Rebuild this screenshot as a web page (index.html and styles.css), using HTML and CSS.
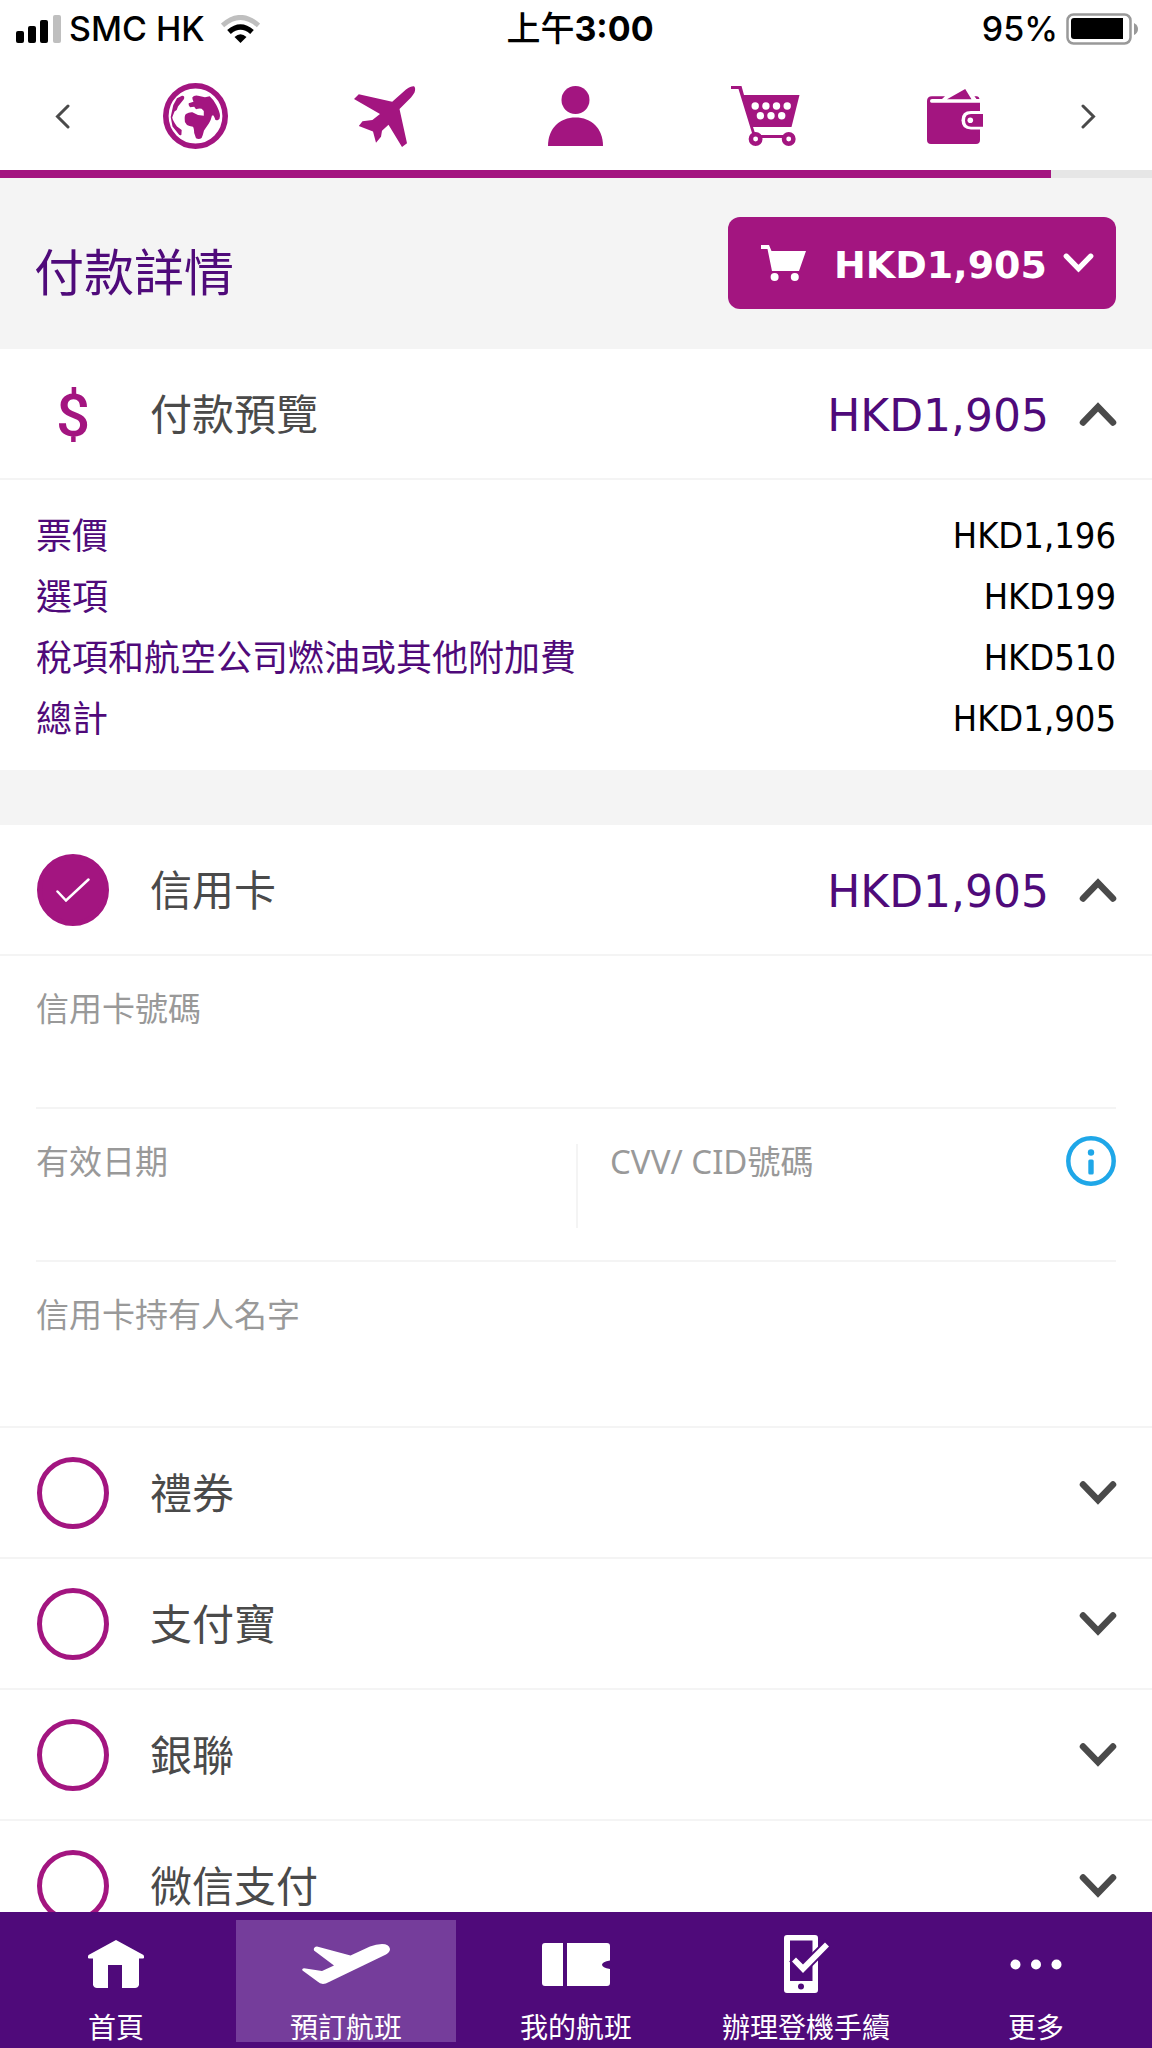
FILE: index.html
```html
<!DOCTYPE html>
<html lang="zh-Hant-HK">
<head>
<meta charset="utf-8">
<meta name="viewport" content="width=device-width, initial-scale=1">
<title>付款詳情</title>
<link rel="stylesheet" href="styles.css">
</head>
<body>
<svg class="defs" aria-hidden="true">
  <symbol id="chevron-down" viewBox="0 0 38 24"><path d="M4 3.500 19 19 34 3.500" fill="none" stroke="currentColor" stroke-width="6.500" stroke-linecap="round"/></symbol>
  <symbol id="chevron-up" viewBox="0 0 38 24"><path d="M4 20.500 19 5 34 20.500" fill="none" stroke="currentColor" stroke-width="6.500" stroke-linecap="round"/></symbol>
</svg>
<div class="app">
  <div class="status">
    <div class="status-left">
      <svg width="45" height="28" viewBox="0 0 45 28" aria-hidden="true"><rect y="16" width="8" height="12" rx="2"/><rect x="12" y="11" width="8" height="17" rx="2"/><rect x="24" y="5" width="8" height="23" rx="2"/><rect x="37" width="8" height="28" rx="2" fill="#bfbfbf"/></svg>
      <span>SMC HK</span>
      <svg class="wifi" width="39" height="28" viewBox="0 0 39 28" aria-hidden="true"><path d="M1.500 10.500Q19.500-5.500 37.500 10.500" fill="none" stroke="#bfbfbf" stroke-width="5"/><path d="M8 17Q19.500 7 31 17" fill="none" stroke="#000" stroke-width="5.500"/><path d="M13.500 22Q19.500 16.500 25.500 22L19.500 28Z"/></svg>
    </div>
    <time class="clock"><span class="meridiem">上午</span>3:00</time>
    <div class="status-right">
      <span>95%</span>
      <svg width="78" height="32" viewBox="0 0 78 32" aria-hidden="true"><rect x="1.500" y="1.500" width="63" height="29" rx="6" fill="none" stroke="#999" stroke-width="2.500"/><path d="M8 5H57V26H8Q5 26 5 23V8Q5 5 8 5Z"/><path d="M68 10Q72 12 72 16T68 22Z" fill="#999"/></svg>
    </div>
  </div>

  <nav class="steps" aria-label="預訂步驟">
    <button class="step-arrow" type="button" aria-label="上一步"><svg width="15" height="25" viewBox="0 0 15 25"><path d="M13 2 2.500 12.500 13 23" fill="none" stroke="currentColor" stroke-width="3" stroke-linecap="round"/></svg></button>
    <a class="step" href="#" aria-label="目的地"><svg width="65" height="66" viewBox="0 0 65 66"><ellipse cx="32.500" cy="33" rx="29.700" ry="30.200" fill="none" stroke="currentColor" stroke-width="5.600"/><path fill="currentColor" d="M29.400 14.300Q31 12 35 12.700L42 14.300 46.700 13.300Q50 16 53.300 22 57 29 57 33 57 36 55 37 52 38 51.500 34.500L50.500 32.500H49Q48 37 46 40.300L41 47.500Q40 52 38.600 55 36 57 33 55.300L31.200 50Q31 45 30 43.700 26 43 24 42 21 39 21.700 36 21.500 32 23 31 26 29 29.400 29.300L35 32 40.800 32.700V28L38.600 25.700Q36 25 33 26.300L31.200 23.700 27 24.300Q25 22 25.700 20.300L30.500 18.700Q29 16.500 29.400 14.300ZM19 12.700Q22 12.500 21 16L15 23.500Q14.500 27 11.500 28.500L9.200 34.500Q10 38 14 43.500L18.700 47 18.400 51.700Q17 53 15.500 51L9.500 43.500 7.700 34 10.300 22 14 15.300Z"/></svg></a>
    <a class="step" href="#" aria-label="航班"><svg width="62" height="61" viewBox="0 0 62 61"><path fill="currentColor" d="M0 13 4.800 8.300 38.200 15.700 52 3.500Q57 0 60 .300 62 2 60.500 6.500 59 9 57 11.500L45.500 23 53 57.300 48 61 34.500 38.700 28 44.700 27 50.700 22 56.700 19 45.500 4.800 40 8.500 35.300 18.400 34 26 28Z"/></svg></a>
    <a class="step" href="#" aria-label="乘客"><svg width="55" height="60" viewBox="0 0 55 60"><circle cx="27.500" cy="14" r="14" fill="currentColor"/><path fill="currentColor" d="M0 60C0 42 12 31.500 27.500 31.500S55 42 55 60Z"/></svg></a>
    <a class="step" href="#" aria-label="選項"><svg width="69" height="60" viewBox="0 0 69 60"><path fill="currentColor" d="M0 0H10.500L13 9H68.500L60.500 41H22L24 47H21L7.500 3H0Z"/><path d="M25 50.500H57" stroke="currentColor" stroke-width="3"/><g fill="#fff" stroke="currentColor" stroke-width="4.500"><circle cx="24.600" cy="53" r="4.700"/><circle cx="57.700" cy="53" r="4.700"/></g><g fill="#fff"><circle cx="24.200" cy="20" r="3.700"/><circle cx="34.900" cy="20" r="3.700"/><circle cx="45.500" cy="20" r="3.700"/><circle cx="56.200" cy="20" r="3.700"/><circle cx="29.400" cy="29.700" r="3.700"/><circle cx="40" cy="29.700" r="3.700"/><circle cx="50.700" cy="29.700" r="3.700"/></g></svg></a>
    <a class="step" href="#" aria-label="付款" aria-current="step"><svg width="56" height="55" viewBox="0 0 56 55"><path fill="currentColor" d="M5 7.300H18L15 10H5Q3 10 3 12T5 13.700H53V51Q53 55 49 55H4Q0 55 0 51V12Q0 7.300 5 7.300ZM20 10.300 38.200 0 44.500 10.300ZM47.400 7.300H50Q52 7.500 52.500 10H49.500Z"/><path fill="#fff" d="M56 22H44Q34.500 22 34.500 31.200T44 40.400H56Z"/><path fill="currentColor" d="M56 25H44Q38 25 38 31.300T44 37.700H56Z"/><circle cx="43.300" cy="31.300" r="2.800" fill="#fff"/></svg></a>
    <button class="step-arrow" type="button" aria-label="下一步"><svg width="15" height="25" viewBox="0 0 15 25"><path d="M2 2 12.500 12.500 2 23" fill="none" stroke="currentColor" stroke-width="3" stroke-linecap="round"/></svg></button>
  </nav>
  <div class="progress" role="progressbar" aria-label="預訂進度" aria-valuenow="91"><div class="progress-fill" style="width:91.2%"></div></div>

  <main class="content">
    <header class="title-bar">
      <h1>付款詳情</h1>
      <button class="cart-button" type="button">
        <svg width="45" height="36" viewBox="0 0 45 36" aria-hidden="true"><path fill="currentColor" d="M0 0H8L10.500 6H45L38 26H11L6.500 4H0Z"/><circle cx="13.600" cy="32" r="4" fill="currentColor"/><circle cx="33.800" cy="32" r="4" fill="currentColor"/></svg>
        <span class="cart-total">HKD1,905</span>
        <svg width="31" height="20" viewBox="0 0 38 24" aria-hidden="true"><use href="#chevron-down"/></svg>
      </button>
    </header>

    <section>
      <div class="row">
        <span class="dollar" aria-hidden="true">$</span>
        <h2 class="row-title">付款預覽</h2>
        <span class="row-amount">HKD1,905</span>
        <button class="toggle" type="button" aria-label="收起付款預覽"><svg width="38" height="24"><use href="#chevron-up"/></svg></button>
      </div>
      <div class="summary">
        <table>
          <tbody>
            <tr><th scope="row">票價</th><td>HKD1,196</td></tr>
            <tr><th scope="row">選項</th><td>HKD199</td></tr>
            <tr><th scope="row">稅項和航空公司燃油或其他附加費</th><td>HKD510</td></tr>
            <tr><th scope="row">總計</th><td>HKD1,905</td></tr>
          </tbody>
        </table>
      </div>
    </section>

    <form class="methods">
      <div class="row">
        <span class="radio"><input type="radio" name="method" id="m-card" checked><svg width="34" height="24" viewBox="0 0 34 24" aria-hidden="true"><path d="M1.500 13.500 10 22.500 32.500 1.500" fill="none" stroke="#fff" stroke-width="2.500" stroke-linecap="round"/></svg></span>
        <label class="row-title" for="m-card">信用卡</label>
        <span class="row-amount">HKD1,905</span>
        <button class="toggle" type="button" aria-label="收起信用卡"><svg width="38" height="24"><use href="#chevron-up"/></svg></button>
      </div>
      <div class="card-form">
        <div class="field-row">
          <div class="field"><label for="number">信用卡號碼</label><input id="number" type="text" inputmode="numeric"></div>
        </div>
        <div class="field-row">
          <div class="field"><label for="expiry">有效日期</label><input id="expiry" type="text"></div>
          <div class="field field-split"><label for="cvv">CVV/ CID號碼</label><input id="cvv" type="text" inputmode="numeric"></div>
          <button class="info" type="button" aria-label="CVV 說明"><svg width="50" height="50" viewBox="0 0 50 50"><circle cx="25" cy="25" r="22.700" fill="none" stroke="currentColor" stroke-width="4.500"/><circle cx="25" cy="16.500" r="3.200" fill="currentColor"/><rect x="22.300" y="23.500" width="5.400" height="15" rx="1.500" fill="currentColor"/></svg></button>
        </div>
        <div class="field-row">
          <div class="field"><label for="holder">信用卡持有人名字</label><input id="holder" type="text"></div>
        </div>
      </div>
      <div class="row">
        <span class="radio"><input type="radio" name="method" id="m-voucher"></span>
        <label class="row-title" for="m-voucher">禮券</label>
        <button class="toggle" type="button" aria-label="展開禮券"><svg width="38" height="24"><use href="#chevron-down"/></svg></button>
      </div>
      <div class="row">
        <span class="radio"><input type="radio" name="method" id="m-alipay"></span>
        <label class="row-title" for="m-alipay">支付寶</label>
        <button class="toggle" type="button" aria-label="展開支付寶"><svg width="38" height="24"><use href="#chevron-down"/></svg></button>
      </div>
      <div class="row">
        <span class="radio"><input type="radio" name="method" id="m-unionpay"></span>
        <label class="row-title" for="m-unionpay">銀聯</label>
        <button class="toggle" type="button" aria-label="展開銀聯"><svg width="38" height="24"><use href="#chevron-down"/></svg></button>
      </div>
      <div class="row">
        <span class="radio"><input type="radio" name="method" id="m-wechat"></span>
        <label class="row-title" for="m-wechat">微信支付</label>
        <button class="toggle" type="button" aria-label="展開微信支付"><svg width="38" height="24"><use href="#chevron-down"/></svg></button>
      </div>
    </form>
  </main>

  <nav class="tabs" aria-label="主選單">
    <a class="tab" href="#"><span class="tab-icon"><svg width="56" height="48" viewBox="0 0 56 48"><path fill="currentColor" d="M28 0 55.500 15Q57 18.500 55 18.500H51V45Q50 48 47 48H34V25H20V48H9Q6 48 5 45V18.500H1Q-1 18.500 .500 15Z"/></svg></span><span>首頁</span></a>
    <a class="tab active" href="#" aria-current="page"><span class="tab-icon"><svg width="88" height="40" viewBox="0 0 88 40"><path fill="currentColor" d="M2 24.200 20 27 32 21.500 12 6.500Q11 3 15 2.500L48.500 11.500 68 2.500Q74 0 80 0 87 0 88 5 88 8 84 10.500L27 38Q20 42 15.500 37.500L.500 26.500Q-.500 24.500 2 24.200Z"/></svg></span><span>預訂航班</span></a>
    <a class="tab" href="#"><span class="tab-icon"><svg width="68" height="43" viewBox="0 0 68 43"><path fill="currentColor" d="M3 0H21V43H3Q0 43 0 40V3Q0 0 3 0ZM25 0H65Q68 0 68 3V17.500Q60 19 60 21.700T68 26V40Q68 43 65 43H25Z"/></svg></span><span>我的航班</span></a>
    <a class="tab" href="#"><span class="tab-icon"><svg width="45" height="58" viewBox="0 0 45 58"><path fill="currentColor" fill-rule="evenodd" d="M3 0H31Q34 0 34 3V55Q34 58 31 58H3Q0 58 0 55V3Q0 0 3 0ZM6 5.500V46H28.500V5.500ZM17 48.500A3 3 0 0 0 17 54.500 3 3 0 0 0 17 48.500Z"/><path d="M8 26.500 12 22.500 19 29.500 41 7.500 45 11.500 19 38Z" fill="currentColor" stroke="#4f0a7a" stroke-width="4" paint-order="stroke"/></svg></span><span>辦理登機手續</span></a>
    <a class="tab" href="#"><span class="tab-icon"><svg width="52" height="11" viewBox="0 0 52 11" fill="currentColor"><circle cx="5.500" cy="5.500" r="5"/><circle cx="26" cy="5.500" r="5"/><circle cx="46.500" cy="5.500" r="5"/></svg></span><span>更多</span></a>
  </nav>
</div>
</body>
</html>
```
FILE: styles.css
```css
:root {
  --magenta: #a31580;
  --purple: #4f0a7a;
  --grey: #f4f4f4;
  --ink: #4a4a4a;
  --gutter: 36px;
}

* { box-sizing: border-box; }

body {
  margin: 0;
  color: var(--ink);
  background: #fff;
  font-family: "Noto Sans", "Noto Sans CJK TC", sans-serif;
}

button {
  margin: 0;
  padding: 0;
  border: 0;
  background: none;
  color: inherit;
  font: inherit;
  cursor: pointer;
}

svg { display: block; flex: none; }
.defs { display: none; }
a { color: inherit; text-decoration: none; }
h1, h2 { margin: 0; font-weight: 400; }

.app {
  display: flex;
  flex-direction: column;
  height: 100vh;
}

/* Status bar */
.status {
  display: grid;
  grid-template-columns: 1fr auto 1fr;
  padding: 8px 8px 12px 16px;
  color: #000;
  font-family: Inter, "Noto Sans CJK TC", sans-serif;
  font-size: 34px;
  font-weight: 500;
  line-height: 42px;
}
.status-left, .status-right { display: flex; align-items: center; gap: 8px; }
.wifi { margin-left: 8px; }
.status-right { justify-content: flex-end; }
.clock { font-weight: 700; }
.meridiem { font-weight: 500; }

/* Booking steps */
.steps {
  display: flex;
  align-items: center;
  height: 108px;
  padding: 0 26px 0 24px;
  color: var(--magenta);
}
.step-arrow {
  display: flex;
  justify-content: center;
  width: 76px;
  padding: 24px 0;
  color: var(--ink);
}
.step { flex: 1; display: flex; justify-content: center; }
.progress { height: 8px; background: #e6e6e6; flex: none; }
.progress-fill { height: 100%; background: var(--magenta); }

.content {
  flex: 1;
  min-height: 0;
  overflow-y: auto;
  scrollbar-width: none;
}

/* Page title */
.title-bar {
  display: flex;
  align-items: flex-end;
  justify-content: space-between;
  padding: 39px var(--gutter) 40px 34px;
  background: var(--grey);
}
h1 { color: var(--purple); font-size: 50px; line-height: 74px; }
.cart-button {
  display: flex;
  align-items: center;
  height: 92px;
  padding: 0 22px 0 33px;
  border-radius: 12px;
  background: var(--magenta);
  color: #fff;
}
.cart-total {
  margin: 0 16px 0 28px;
  padding-top: 3px;
  font-family: "DejaVu Sans", sans-serif;
  font-size: 38px;
  font-weight: 700;
}

/* Accordion rows */
.row {
  display: flex;
  align-items: center;
  height: 131px;
  padding: 0 35px 0 37px;
  border-bottom: 2px solid var(--grey);
}
.row-title { flex: 1; margin-left: 41px; font-size: 42px; line-height: 60px; }
.row-amount {
  margin-right: 30px;
  padding-top: 3px;
  color: var(--purple);
  font-family: "DejaVu Sans", sans-serif;
  font-size: 44px;
}
.dollar {
  width: 72px;
  padding-top: 3px;
  color: var(--magenta);
  font-family: Roboto, sans-serif;
  font-size: 60px;
  font-weight: 500;
  text-align: center;
}

/* Price summary */
.summary { padding: 25px var(--gutter) 21px; }
table { width: 100%; border-collapse: collapse; font-size: 36px; line-height: 61px; }
th, td { height: 61px; padding: 0; }
th { color: var(--purple); font-weight: 400; text-align: left; }
td {
  color: #000;
  font-family: "DejaVu Sans Condensed", "DejaVu Sans", sans-serif;
  font-size: 36px;
  text-align: right;
}

/* Payment methods */
.methods { border-top: 55px solid var(--grey); }
.radio { display: grid; place-items: center; }
.radio > * { grid-area: 1 / 1; }
.radio svg { pointer-events: none; z-index: 1; }
.radio input {
  appearance: none;
  width: 72px;
  height: 72px;
  margin: 0;
  border: 5px solid var(--magenta);
  border-radius: 50%;
}
.radio input:checked { background: var(--magenta); }

.card-form {
  padding: 0 var(--gutter) 13px;
  border-bottom: 2px solid var(--grey);
}
.field-row {
  position: relative;
  display: grid;
  grid-auto-flow: column;
  grid-auto-columns: minmax(0, 1fr);
  border-bottom: 2px solid var(--grey);
}
.field-row:last-child { border-bottom: 0; }
.field { display: flex; flex-direction: column; padding-top: 28px; }
.field-split {
  padding-left: 34px;
  background: linear-gradient(var(--grey), var(--grey)) 0 35px / 2px 84px no-repeat;
}
.field label { color: #999; font-size: 33px; line-height: 50px; }
.field input {
  width: 100%;
  height: 73px;
  padding: 0;
  border: 0;
  outline: 0;
  background: none;
  color: var(--ink);
  font: inherit;
  font-size: 33px;
}
/* Sits over the end of the security code field */
.info { position: absolute; top: 27px; right: 0; color: #1fa7e8; }

/* Bottom tabs */
.tabs {
  flex: none;
  display: grid;
  grid-template-columns: repeat(5, 1fr);
  gap: 10px;
  padding: 8px 6px 6px;
  background: var(--purple);
  color: #fff;
}
.tab {
  display: flex;
  flex-direction: column;
  align-items: center;
  gap: 4px;
  font-size: 28px;
  line-height: 30px;
  white-space: nowrap;
}
.tab.active { background: #753d9b; }
.tab-icon { display: flex; align-items: center; height: 88px; }
```
